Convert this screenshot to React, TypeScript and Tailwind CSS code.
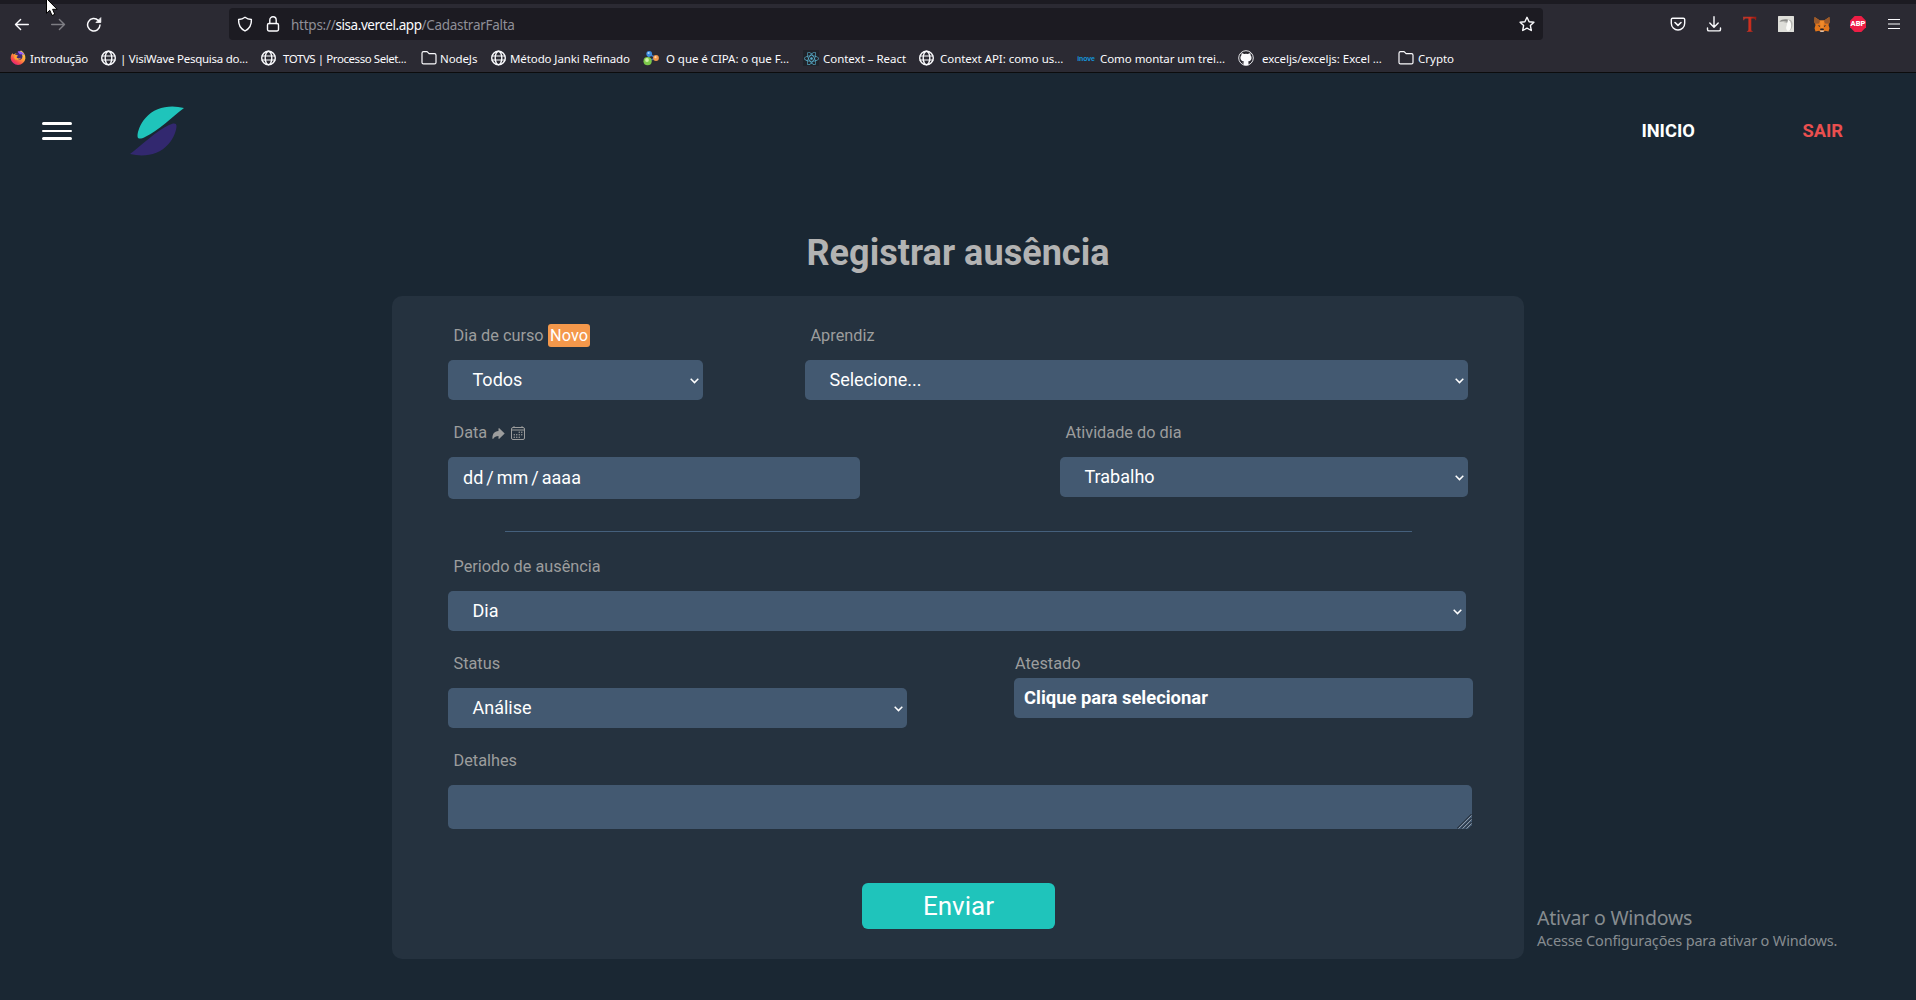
import type { ReactNode } from 'react';
import { IoArrowRedo, IoCalendarOutline } from 'react-icons/io5';
import { FaReact } from 'react-icons/fa';

const stroke = {
  fill: 'none',
  stroke: '#fbfbfe',
  strokeWidth: 1.4,
  strokeLinecap: 'round' as const,
  strokeLinejoin: 'round' as const,
};

function Globe() {
  return (
    <svg viewBox="0 0 16 16" className="size-4" {...stroke}>
      <circle cx="7.5" cy="8" r="6.8" />
      <ellipse cx="7.5" cy="8" rx="3.3" ry="6.8" />
      <path d="M1 6h13M1 10h13" strokeWidth="1.2" />
    </svg>
  );
}

function Folder() {
  return (
    <svg viewBox="0 0 16 16" className="size-4" {...stroke} strokeWidth={1.2}>
      <path d="M1 12.4V3.2C1 2.3 1.6 1.7 2.5 1.7h3.6l2 2h5.4c.9 0 1.5.6 1.5 1.5v7.2c0 .9-.6 1.5-1.5 1.5h-11c-.9 0-1.5-.6-1.5-1.5z" />
    </svg>
  );
}

function Firefox() {
  return (
    <svg viewBox="0 0 16 16" className="size-4">
      <defs>
        <linearGradient id="fx" x1="0.85" y1="0.1" x2="0.25" y2="0.95">
          <stop offset="0" stopColor="#ffe14d" />
          <stop offset="0.45" stopColor="#ff9a3a" />
          <stop offset="0.8" stopColor="#f8434f" />
          <stop offset="1" stopColor="#e0247d" />
        </linearGradient>
      </defs>
      <path d="M2.4 3.2 3.6 4.4 5.2 3.6 8 3l3-2.400c3 1.800 4.600 4.600 4.400 7.800A7.400 7.400 0 0 1 .7 8.400C.6 6.400 1.300 4.600 2.400 3.200z" fill="url(#fx)" />
      <circle cx="8.600" cy="6.200" r="3.800" fill="#3f2a78" />
      <path d="M7.600 1.400c3-.9 6 1 7 4.200-1.500-1.300-3.200-1.500-4.600-1z" fill="#9059ff" />
      <path d="M4.300 5.200c1.300-.8 2.800-.5 3.700.5L6.600 7c.5 1.600 2.500 1.900 4.200.8C10 10.500 5 11.200 4.100 7.600z" fill="#ffa436" />
    </svg>
  );
}

function Molecule() {
  return (
    <svg viewBox="0 0 16 16" className="size-4">
      <path d="M6.200 4 4.600 11M6.200 4l7 4M5 11l8-3" stroke="#3f6fb5" strokeWidth="1.600" />
      <circle cx="6.200" cy="3.800" r="2.900" fill="#3b8be0" />
      <circle cx="5.600" cy="3" r="1.100" fill="#a8d2fa" />
      <circle cx="4.600" cy="11.200" r="4.100" fill="#7cc84a" />
      <circle cx="4" cy="10" r="1.900" fill="#d0f2a6" />
      <circle cx="13" cy="8" r="2.900" fill="#f2984c" />
      <circle cx="12.500" cy="7.200" r="1.100" fill="#ffd3a3" />
    </svg>
  );
}

function ReactMark() {
  return (
    <span className="flex size-4 items-center justify-center bg-[#20232a]">
      <FaReact className="size-[15px] text-[#58aecb]" />
    </span>
  );
}

function Github() {
  return (
    <svg viewBox="0 0 16 16" className="size-4">
      <circle cx="8" cy="8" r="7.300" fill="#24232b" stroke="#e4e4e8" strokeWidth="1" />
      <path
        d="M3.700 2.900 6.300 4a8 8 0 0 1 3.400 0l2.600-1.100.4 2.600c.9 1 1 2.300.7 3.500-.5 1.600-1.700 2.200-3.300 2.400.4.500.4 1 .4 1.700v2.200H5.700v-1.800l-2-.7 2-.1c0-.5.100-.9.300-1.300-1.700-.2-2.900-.8-3.400-2.400-.3-1.200-.2-2.500.7-3.500z"
        fill="#fbfbfe"
      />
    </svg>
  );
}

function Inove() {
  return (
    <span className="flex size-4 items-center justify-center font-['Liberation_Sans'] text-[7px] leading-none font-bold tracking-[-0.2px] text-[#1496dc]">
      inove
    </span>
  );
}

function Bookmark({ icon, label, box, text }: { icon: ReactNode; label: string; box: string; text: string }) {
  return (
    <div className={`flex h-full shrink-0 items-center ${box}`}>
      {icon}
      <span className={`text-[11.5px] leading-[17px] whitespace-pre text-[#fbfbfe] ${text}`}>{label}</span>
    </div>
  );
}

function Bookmarks() {
  return (
    <div className="flex h-[28px] items-center pl-[10px]">
      <Bookmark icon={<Firefox />} label="Introdução" box="w-[91px] gap-1" text="tracking-[-0.17px]" />
      <Bookmark icon={<Globe />} label="| VisiWave Pesquisa do..." box="w-[160px] gap-[3px]" text="tracking-[-0.26px]" />
      <Bookmark icon={<Globe />} label="TOTVS | Processo Selet..." box="w-[160px] gap-[6px]" text="tracking-[-0.43px]" />
      <Bookmark icon={<Folder />} label="NodeJs" box="w-[70px] gap-[3px]" text="tracking-[-0.1px]" />
      <Bookmark icon={<Globe />} label="Método Janki Refinado" box="w-[152px] gap-[3px]" text="tracking-[-0.1px]" />
      <Bookmark icon={<Molecule />} label="O que é CIPA: o que F..." box="w-[160px] gap-[7px]" text="tracking-[-0.05px]" />
      <Bookmark icon={<ReactMark />} label="Context – React" box="w-[116px] gap-1" text="tracking-[-0.03px]" />
      <Bookmark icon={<Globe />} label="Context API: como us..." box="w-[159px] gap-[5px]" text="tracking-[-0.04px]" />
      <Bookmark icon={<Inove />} label="Como montar um trei..." box="w-[160px] gap-[6px]" text="tracking-[-0.06px]" />
      <Bookmark icon={<Github />} label="exceljs/exceljs: Excel ..." box="w-[160px] gap-2" text="tracking-[-0.04px]" />
      <Bookmark icon={<Folder />} label="Crypto" box="gap-1" text="tracking-normal" />
    </div>
  );
}

function Toolbar() {
  return (
    <div className="flex h-10 items-center">
      <div className="flex w-[229px] shrink-0 items-center gap-5 pl-[14px]">
        <svg viewBox="0 0 16 16" className="size-4" {...stroke}>
          <path d="M1.500 8.500h12.800M6.600 3.400 1.500 8.500l5.100 5.100" />
        </svg>
        <svg viewBox="0 0 16 16" className="size-4 opacity-40" {...stroke}>
          <path d="M1.700 8.500h12.800M9.400 3.400l5.100 5.100-5.100 5.100" />
        </svg>
        <svg viewBox="0 0 16 16" className="size-4" {...stroke} strokeWidth={1.5}>
          <path d="M14 9A6.200 6.200 0 1 1 12.200 4.400" />
          <path d="M14.800 2v4.500h-4.500z" fill="#fbfbfe" strokeWidth="0.800" />
        </svg>
      </div>
      <div className="flex h-8 w-[1314px] shrink-0 items-center rounded bg-[#1c1b22] pr-2 pl-2">
        <svg viewBox="0 0 16 16" className="size-4" {...stroke}>
          <path d="M8 1.200c2 1.500 4 2.100 6.400 2.300.3 5.400-1.900 9.200-6.400 11.500C3.500 12.700 1.300 8.900 1.600 3.500 4 3.300 6 2.700 8 1.200z" />
        </svg>
        <svg viewBox="0 0 16 16" className="ml-3 size-4" {...stroke}>
          <rect x="2.500" y="7.500" width="11" height="7.500" rx="1.400" />
          <path d="M4.800 7.500V4a3.200 3.200 0 0 1 6.400 0v3.500" />
        </svg>
        <div className="ml-[10px] flex grow pt-px text-[13.5px] leading-5 text-[#8f8f98]">
          <span className="tracking-[-0.25px]">https://</span>
          <span className="tracking-[-0.45px] text-[#fbfbfe]">sisa.vercel.app</span>
          <span className="tracking-[-0.29px]">/CadastrarFalta</span>
        </div>
        <svg viewBox="0 0 16 16" className="size-4" {...stroke}>
          <path d="m8 1.300 2.100 4.400 4.800.6-3.500 3.300.9 4.900L8 12.200l-4.300 2.300.9-4.900L1.100 6.300l4.800-.6z" />
        </svg>
      </div>
      <div className="ml-[127px] flex items-center gap-5">
        <svg viewBox="0 0 16 16" className="size-4" {...stroke}>
          <path d="M2.600 2.300h10.800c.8 0 1.300.5 1.300 1.300v3.700a6.700 6.700 0 0 1-13.400 0V3.600c0-.8.5-1.300 1.300-1.300z" />
          <path d="m5 6.500 3 2.900 3-2.900" strokeWidth="1.600" />
        </svg>
        <svg viewBox="0 0 16 16" className="size-4" {...stroke}>
          <path d="M8 .8v10M3.800 7 8 11.200 12.200 7M1.500 12v1.400c0 .9.600 1.500 1.500 1.500h10c.9 0 1.500-.6 1.500-1.500V12" />
        </svg>
        <svg viewBox="0 0 16 16" className="size-4">
          <defs>
            <linearGradient id="tt" x1="0" x2="1">
              <stop offset="0" stopColor="#b3372c" />
              <stop offset="0.500" stopColor="#cf2f1f" />
              <stop offset="1" stopColor="#8e1a12" />
            </linearGradient>
          </defs>
          <path d="M1 .8h13.400l-.3 3.400h-.8c-.3-1.200-1-1.600-2.700-1.600H9.300v10.900c0 1.300.4 1.400 1.500 1.700v.6h-6v-.6c1.100-.3 1.600-.4 1.600-1.700V2.600H4.800C3.100 2.600 2.400 3 2.100 4.200h-.8z" fill="url(#tt)" />
        </svg>
        <svg viewBox="0 0 16 16" className="size-4">
          <rect width="16" height="16" rx="0.500" fill="#deded9" />
          <path d="M1.500 5.800C3 3.600 6 3 9.500 3.500l2.300.7-2.300 2.600c-3-.8-5.500-.6-8-1z" fill="#8a8a87" />
          <path d="M1.800 5.600c2.200-.9 5-.7 7.200.2l-.6.800z" fill="#c5c5c0" />
          <path d="M10 3.500c2.500-.2 4 1.900 4 4.500 0 3.500-1.500 6.300-4 7-1.900-.9-2.500-3.300-1.300-5.500z" fill="#fbfbf8" />
          <path d="M10 3.500c3.300-.8 5.200 2.500 4.400 6.500-.4 2.200-1.400 3.800-2.400 4.500 1.600-3 1.500-6.700.3-9z" fill="#b5b5b1" />
        </svg>
        <svg viewBox="0 0 16 16" className="size-4">
          <path d="M.6 1 6 4.500h4L15.400 1l.3 5-1.200 3 1 3.200-1 3.300-3.600-.8L9.500 16h-3l-1.400-1.300-3.600.8-1-3.300 1-3.200L.3 6z" fill="#e2761b" />
          <path d="M.6 1 6 4.700 5 7.500 1 7.800.3 6zM15.400 1 10 4.700l1 2.800 4 .3.700-1.800z" fill="#9a5a2c" />
          <path d="M6 4.500h4L9.500 12h-3z" fill="#f08a2b" />
          <path d="m3.700 9.300 2.500.4-.6 1.300zM12.300 9.300l-2.500.4.600 1.300z" fill="#2d2f3c" />
          <path d="m6 13 1-.6h2l1 .6-.5 1.300h-3z" fill="#20232f" />
          <path d="M6 14.500h4l-.6 1.500H6.600z" fill="#d7c1b3" />
        </svg>
        <div className="relative flex size-4 items-center justify-center">
          <svg viewBox="0 0 16 16" className="absolute inset-0 size-4">
            <path d="M4.700 0h6.600L16 4.700v6.600L11.300 16H4.700L0 11.300V4.700z" fill="#ed1e45" />
          </svg>
          <span className="relative font-['Roboto'] text-[7.5px] leading-none font-black text-white">ABP</span>
        </div>
        <svg viewBox="0 0 16 16" className="size-4" {...stroke} strokeWidth={1.2} strokeLinecap="butt">
          <path d="M2 3.500h12M2 8h12M2 12.500h12" />
        </svg>
      </div>
    </div>
  );
}

function Chevron() {
  return (
    <svg viewBox="0 0 9 6" className="mt-px h-[6px] w-[9px]" fill="none" stroke="#fff" strokeWidth="1.500">
      <path d="M.7.800 4.500 4.600 8.300.800" />
    </svg>
  );
}

function Label({ children, flush = false }: { children: ReactNode; flush?: boolean }) {
  return (
    <div className="pt-px">
      <div className={`flex h-[23px] items-center text-[16.300px] leading-[23px] text-[#9c9d9d] ${flush ? 'pl-px' : 'pl-[5.500px]'}`}>
        {children}
      </div>
    </div>
  );
}

function Select({ value, width }: { value: string; width: string }) {
  return (
    <div className={`mt-[13px] flex h-10 items-center justify-between rounded-[5px] bg-[#435971] pr-[4.500px] pl-[24.500px] text-lg text-white ${width}`}>
      <span>{value}</span>
      <Chevron />
    </div>
  );
}

export default function App() {
  return (
    <div className="relative h-[1000px] w-[1916px] overflow-hidden bg-[#1a2733] font-['Roboto',sans-serif]">
      <div className="h-[73px] border-b border-[#0c0c0d] bg-[#2b2a33] font-['Noto_Sans',sans-serif]">
        <div className="h-1 bg-[#1c1b22]" />
        <Toolbar />
        <Bookmarks />
      </div>

      <header className="flex h-[116px] items-center pr-[73px] pl-[42px]">
        <div className="flex w-[30px] flex-col gap-[5px]">
          <div className="h-[2.500px] rounded-full bg-white" />
          <div className="h-[2.500px] rounded-full bg-white" />
          <div className="h-[2.500px] rounded-full bg-white" />
        </div>
        <svg viewBox="0 0 54 50" className="ml-[58px] h-[50px] w-[54px]">
          <path d="M54 2C40-1.500 25 1 15.500 12 10 18 7.500 26 7.500 30c0 3.500 3.500 3 7.500 1C29 24 41 12 54 2z" fill="#1fc4bb" />
          <path d="M0 48c14 3.500 29 1 38.500-10C44 32 46.500 24 46.500 20c0-3.500-3.500-3-7.500-1C25 26 13 38 0 48z" fill="#32286f" />
        </svg>
        <nav className="ml-auto flex gap-[107.500px] text-[18.300px] font-bold">
          <a className="text-white">INICIO</a>
          <a className="text-[#ea4f4f]">SAIR</a>
        </nav>
      </header>

      <h1 className="mt-[44px] text-center text-[36px] leading-[40px] font-bold tracking-[0.040px] text-[#b3b3b3]">Registrar ausência</h1>

      <main className="mt-[23px] ml-[392px] flex h-[663px] w-[1132px] flex-col rounded-[10px] bg-[#25323f] px-14 pt-[27px]">
        <div className="flex gap-[102px]">
          <div>
            <Label>
              Dia de curso
              <span className="ml-1 flex h-[23px] items-center rounded-[3px] bg-[#f4984b] px-[2.500px] text-white">Novo</span>
            </Label>
            <Select value="Todos" width="w-[255px]" />
          </div>
          <div>
            <Label>Aprendiz</Label>
            <Select value="Selecione..." width="w-[663px]" />
          </div>
        </div>

        <div className="mt-5 flex gap-[200px]">
          <div>
            <Label>
              Data
              <IoArrowRedo className="mt-px ml-[4px] size-[15px]" />
              <IoCalendarOutline className="mt-px ml-[4px] size-4" />
            </Label>
            <div className="mt-[13px] flex h-[42px] w-[412px] items-center gap-[3px] rounded-[5px] bg-[#435971] pl-[15px] text-lg text-white">
              <span>dd</span>
              <span>/</span>
              <span>mm</span>
              <span>/</span>
              <span>aaaa</span>
            </div>
          </div>
          <div>
            <Label>Atividade do dia</Label>
            <Select value="Trabalho" width="w-[408px]" />
          </div>
        </div>

        <div className="mt-8 ml-[57px] h-px w-[907px] shrink-0 bg-[#45607c]" />

        <div className="mt-[22px]">
          <Label>Periodo de ausência</Label>
          <Select value="Dia" width="w-[1018px]" />
        </div>

        <div className="mt-5 flex gap-[107px]">
          <div>
            <Label>Status</Label>
            <Select value="Análise" width="w-[459px]" />
          </div>
          <div>
            <Label flush>Atestado</Label>
            <div className="mt-[3px] flex h-10 w-[459px] items-center rounded-[5px] bg-[#435971] pl-[10px] text-[18.400px] font-bold text-white">
              Clique para selecionar
            </div>
          </div>
        </div>

        <div className="mt-5">
          <Label>Detalhes</Label>
          <div className="mt-[13px] flex h-11 w-[1024px] items-end justify-end rounded-[5px] bg-[#435971]">
            <svg viewBox="0 0 15 15" className="size-[15px]" fill="none" strokeWidth="1">
              <path d="M0 14.500 14.500 0M4 14.500 14.500 4M8 14.500 14.500 8M12 14.500l2.500-2.500" stroke="#1b232c" />
              <path d="M1.500 14.500 14.500 1.500M5.500 14.500l9-9M9.500 14.500l5-5" stroke="#8d98a5" />
            </svg>
          </div>
        </div>

        <button className="mt-[54px] ml-[414px] h-[46px] w-[193px] rounded-[6px] bg-[#1fc4bb] text-[26px] leading-[46px] text-white">
          Enviar
        </button>
      </main>

      <div className="absolute top-[905px] left-[1537px] font-['Noto_Sans',sans-serif] text-[#868c90]">
        <div className="text-[19.500px] leading-[26px] tracking-[-0.22px]">Ativar o Windows</div>
        <div className="-mt-px text-[14.500px] leading-[20px] tracking-[-0.17px]">Acesse Configurações para ativar o Windows.</div>
      </div>

      <svg viewBox="0 0 14 18" className="absolute top-[-2px] left-[45px] h-[19px] w-[14px]">
        <path d="M1.500 0v14.800l3.300-3 2.200 5.200 2.800-1.200-2.200-5h4.600z" fill="#fff" stroke="#000" strokeWidth="1" />
      </svg>
    </div>
  );
}
